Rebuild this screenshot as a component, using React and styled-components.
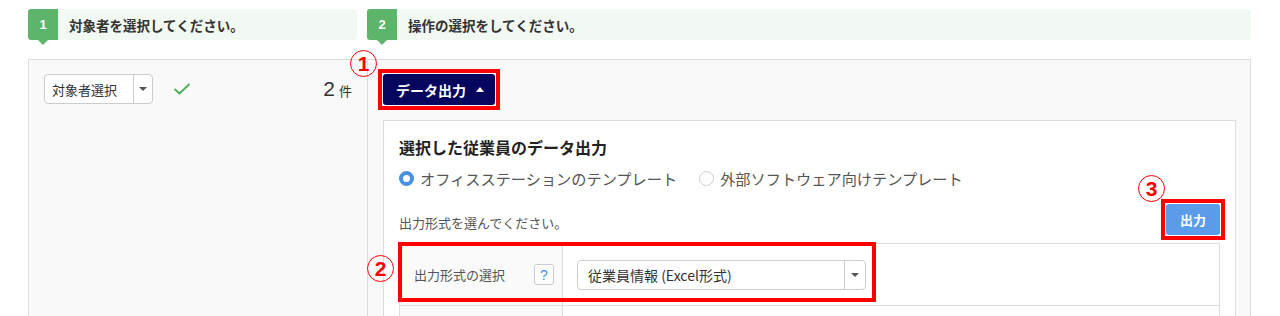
import React from "react";
import styled, { createGlobalStyle } from "styled-components";

const GlobalStyle = createGlobalStyle`
  html, body {
    margin: 0;
    padding: 0;
    background: #fff;
    overflow: hidden;
  }
  body {
    font-family: "Noto Sans CJK JP", "Noto Sans", sans-serif;
    color: #333;
  }
  * { box-sizing: border-box; }
`;

const Page = styled.div`
  padding: 9px 29px 0 28px;
`;

const Steps = styled.div`
  display: grid;
  grid-template-columns: 329px 1fr;
  column-gap: 10px;
`;

const Step = styled.div`
  display: flex;
  align-items: center;
  height: 31px;
  background: #f2f8f2;
  border-radius: 4px;
`;

const StepBadge = styled.div`
  position: relative;
  width: 30px;
  height: 31px;
  display: flex;
  align-items: center;
  justify-content: center;
  background: #5db46b;
  color: #fff;
  font-family: "Liberation Sans", sans-serif;
  font-weight: 700;
  font-size: 13px;
  border-radius: 3px 0 0 3px;

  &::after {
    content: "";
    position: absolute;
    left: 50%;
    bottom: -5px;
    transform: translateX(-50%);
    border-left: 5px solid transparent;
    border-right: 5px solid transparent;
    border-top: 5px solid #5db46b;
  }
`;

const StepText = styled.span`
  margin-left: 11px;
  font-size: 13.5px;
  font-weight: 700;
  color: #333;
`;

const Panel = styled.div`
  margin-top: 19px;
  display: grid;
  grid-template-columns: 339px 1fr;
  background: #f9f9f9;
  border: 1px solid #ddd;
  min-height: 300px;
`;

const LeftColumn = styled.div`
  border-right: 1px solid #ddd;
  padding: 14px 15px;
`;

const TargetRow = styled.div`
  display: flex;
  align-items: center;
  height: 30px;
`;

const SelectBox = styled.div`
  display: flex;
  width: ${(p) => p.$width}px;
  height: 30px;
  background: #fff;
  border: 1px solid #ccc;
  border-radius: 4px;
`;

const SelectLabel = styled.span`
  flex: 1;
  display: flex;
  align-items: center;
  padding-left: ${(p) => p.$pad}px;
  font-size: ${(p) => p.$size || 13}px;
  color: #333;
  white-space: nowrap;
`;

const SelectArrow = styled.span`
  width: ${(p) => p.$width}px;
  border-left: 1px solid #ccc;
  display: flex;
  align-items: center;
  justify-content: center;

  &::before {
    content: "";
    border-left: 4px solid transparent;
    border-right: 4px solid transparent;
    border-top: 4px solid #555;
  }
`;

const Check = styled.svg`
  margin-left: 20px;
`;

const Count = styled.div`
  margin-left: auto;
  display: flex;
  align-items: baseline;
  color: #333;
`;

const CountNumber = styled.span`
  font-family: "Liberation Sans", sans-serif;
  font-size: 21px;
`;

const CountUnit = styled.span`
  margin-left: 4px;
  font-size: 13px;
`;

const RightColumn = styled.div`
  padding: 14px 14px 0 15px;
`;

const Marked = styled.div`
  position: relative;
  display: inline-flex;
`;

/* red annotation frame drawn over a control */
const Frame = styled.span`
  position: absolute;
  inset: -5px;
  border: 4px solid #f00;
  pointer-events: none;
`;

const Mark = styled.span`
  position: absolute;
  left: ${(p) => p.$left}px;
  top: ${(p) => p.$top}px;
  width: 27px;
  height: 27px;
  border: 1px solid #f00;
  border-radius: 50%;
  display: flex;
  align-items: center;
  justify-content: center;
  color: #f00;
  font-family: "Liberation Sans", sans-serif;
  font-weight: 700;
  font-size: 21px;
  line-height: 1;
`;

const DataButton = styled.button`
  height: 31px;
  width: 112px;
  padding: 0 0 0 13px;
  display: flex;
  align-items: center;
  gap: 10px;
  background: #06065e;
  color: #fff;
  border: none;
  border-radius: 3px;
  font-family: inherit;
  font-weight: 700;
  font-size: 14px;

  &::after {
    content: "";
    border-left: 4px solid transparent;
    border-right: 4px solid transparent;
    border-bottom: 5px solid #fff;
  }
`;

const Card = styled.div`
  margin-top: 15px;
  background: #fff;
  border: 1px solid #ddd;
  padding: 14px 15px 0 15px;
`;

const CardTitle = styled.div`
  font-size: 16px;
  font-weight: 700;
  line-height: 24px;
  color: #222;
`;

const RadioRow = styled.div`
  margin-top: 7px;
  height: 24px;
  display: flex;
  align-items: center;
  gap: 22px;
`;

const RadioItem = styled.label`
  display: flex;
  align-items: center;
  gap: 6px;
  font-size: 15.2px;
  color: #555;
`;

const RadioDot = styled.span`
  width: 15px;
  height: 15px;
  border-radius: 50%;
  background: #fff;
  border: ${(p) => (p.$checked ? "4.5px solid #4a90e2" : "1px solid #ccc")};
`;

const DescRow = styled.div`
  margin-top: 14px;
  display: flex;
  align-items: center;
  justify-content: space-between;
`;

const Desc = styled.span`
  font-size: 13px;
  color: #555;
  padding-top: 5px;
`;

const OutputButton = styled.button`
  height: 31px;
  width: 54px;
  padding: 0;
  background: #5b9be8;
  color: #fff;
  border: none;
  border-radius: 3px;
  font-family: inherit;
  font-weight: 700;
  font-size: 13px;
`;

const FormTable = styled.div`
  position: relative;
  margin-top: 8px;
  border: 1px solid #ddd;
  border-bottom: none;
`;

const FormRow = styled.div`
  display: grid;
  grid-template-columns: 163px 1fr;
  min-height: ${(p) => p.$height}px;
  border-bottom: 1px solid #ddd;
`;

const LabelCell = styled.div`
  display: flex;
  align-items: center;
  justify-content: space-between;
  padding: 0 8px 0 14px;
  background: #fafafa;
  border-right: 1px solid #ddd;
  font-size: 13px;
  color: #555;
`;

const HelpIcon = styled.span`
  width: 20px;
  height: 21px;
  display: flex;
  align-items: center;
  justify-content: center;
  background: #fff;
  border: 1px solid #ccc;
  border-radius: 3px;
  color: #4a90e2;
  font-family: "Liberation Sans", sans-serif;
  font-size: 14px;
`;

const ValueCell = styled.div`
  display: flex;
  align-items: center;
  padding-left: 14px;
`;

const TableFrame = styled.div`
  position: absolute;
  left: -2px;
  top: -2px;
  width: 478px;
  height: 60px;
  border: 4px solid #f00;
  pointer-events: none;
`;

const App = () => {
  return (
    <Page>
      <GlobalStyle />
      <Steps>
        <Step>
          <StepBadge>1</StepBadge>
          <StepText>対象者を選択してください。</StepText>
        </Step>
        <Step>
          <StepBadge>2</StepBadge>
          <StepText>操作の選択をしてください。</StepText>
        </Step>
      </Steps>

      <Panel>
        <LeftColumn>
          <TargetRow>
            <SelectBox $width={109}>
              <SelectLabel $pad={7}>対象者選択</SelectLabel>
              <SelectArrow $width={19} />
            </SelectBox>
            <Check width="18" height="12" viewBox="0 0 18 12">
              <polyline
                points="1.5,6 6.5,10.5 16.5,1"
                fill="none"
                stroke="#4cae5c"
                strokeWidth="1.8"
              />
            </Check>
            <Count>
              <CountNumber>2</CountNumber>
              <CountUnit>件</CountUnit>
            </Count>
          </TargetRow>
        </LeftColumn>

        <RightColumn>
          <Marked>
            <DataButton>データ出力</DataButton>
            <Frame />
            <Mark $left={-33} $top={-24}>1</Mark>
          </Marked>

          <Card>
            <CardTitle>選択した従業員のデータ出力</CardTitle>
            <RadioRow>
              <RadioItem>
                <RadioDot $checked />
                オフィスステーションのテンプレート
              </RadioItem>
              <RadioItem>
                <RadioDot />
                外部ソフトウェア向けテンプレート
              </RadioItem>
            </RadioRow>

            <DescRow>
              <Desc>出力形式を選んでください。</Desc>
              <Marked>
                <OutputButton>出力</OutputButton>
                <Frame />
                <Mark $left={-28} $top={-29}>3</Mark>
              </Marked>
            </DescRow>

            <FormTable>
              <FormRow $height={62}>
                <LabelCell>
                  出力形式の選択
                  <HelpIcon>?</HelpIcon>
                </LabelCell>
                <ValueCell>
                  <SelectBox $width={289}>
                    <SelectLabel $pad={10} $size={14}>
                      従業員情報 (Excel形式)
                    </SelectLabel>
                    <SelectArrow $width={21} />
                  </SelectBox>
                </ValueCell>
              </FormRow>
              <FormRow $height={44}>
                <LabelCell />
                <ValueCell />
              </FormRow>
              <TableFrame />
              <Mark $left={-33} $top={11}>2</Mark>
            </FormTable>
          </Card>
        </RightColumn>
      </Panel>
    </Page>
  );
};

export default App;
